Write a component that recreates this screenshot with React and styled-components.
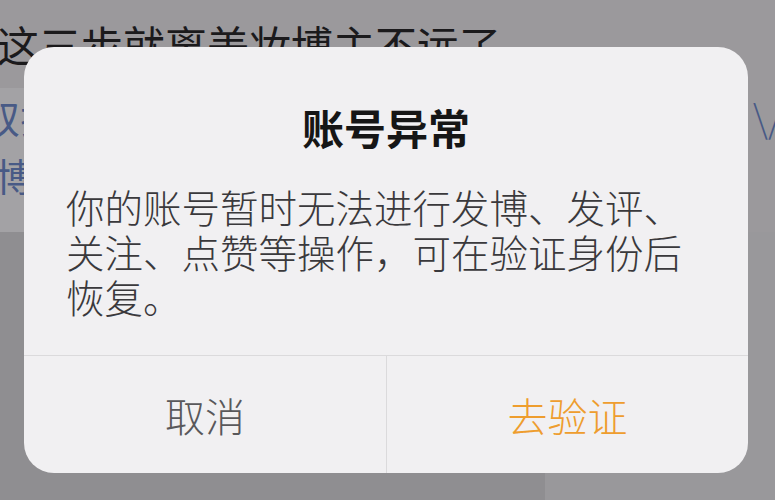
import React from "react";
import styled, { createGlobalStyle } from "styled-components";

const GlobalStyle = createGlobalStyle`
  html, body {
    margin: 0;
    padding: 0;
    background: #9b999c;
  }
  body {
    font-family: "Noto Sans CJK SC", "Noto Sans", sans-serif;
  }
`;

const Screen = styled.div`
  position: relative;
  width: 775px;
  height: 500px;
  overflow: hidden;
  display: flex;
  flex-direction: column;
  background: #9b999c;
`;

const Headline = styled.div`
  height: 88px;
  display: flex;
  align-items: center;
  margin-left: -3px;
  font-size: 42px;
  line-height: 1;
  color: #1b1a1c;
  white-space: nowrap;
`;

const ArticleRow = styled.div`
  height: 144px;
  display: flex;
  justify-content: space-between;
`;

const ArticleLeft = styled.div`
  width: 320px;
  background: #a3a2a5;
  display: flex;
  flex-direction: column;
  overflow: hidden;
`;

const LinkLine = styled.div`
  font-size: 38px;
  line-height: 58px;
  color: #485a86;
  white-space: nowrap;
  margin-left: ${(p) => p.$shift}px;
`;

const ArticleRight = styled.div`
  width: 40px;
  display: flex;
  justify-content: flex-end;
  overflow: hidden;
`;

const SideGlyph = styled.div`
  font-size: 38px;
  line-height: 58px;
  color: #485a86;
  white-space: nowrap;
  margin-right: -8px;
  font-weight: 300;
`;

const LowerRow = styled.div`
  flex: 1;
  display: grid;
  grid-template-columns: 545px 1fr;
`;

const LowerPane = styled.div`
  background: ${(p) => p.$tone};
`;

const Overlay = styled.div`
  position: absolute;
  inset: 0;
  padding: 47px 27px 27px 24px;
  display: flex;
  align-items: flex-start;
`;

const Dialog = styled.div`
  width: 724px;
  background: #f1f0f2;
  border-radius: 30px;
  overflow: hidden;
  display: flex;
  flex-direction: column;
`;

const Content = styled.div`
  padding: 55px 42px 36px 42px;
  display: flex;
  flex-direction: column;
`;

const Title = styled.div`
  font-size: 42px;
  line-height: 50px;
  font-weight: 700;
  color: #161616;
  text-align: center;
  margin-bottom: 32px;
`;

const Message = styled.div`
  font-size: 38.5px;
  line-height: 45px;
  font-weight: 300;
  color: #3a393c;
  white-space: nowrap;
`;

const Actions = styled.div`
  display: grid;
  grid-template-columns: 362px 1fr;
  border-top: 1px solid #dbdadc;
  height: 117px;
`;

const ActionButton = styled.button`
  border: none;
  background: transparent;
  margin: 0;
  padding: 0;
  font-family: inherit;
  font-size: 40px;
  font-weight: 300;
  line-height: 1;
  color: ${(p) => p.$color};
  display: flex;
  align-items: center;
  justify-content: center;
  border-left: ${(p) => (p.$divided ? "1px solid #dbdadc" : "none")};
  cursor: pointer;
`;

export default function App() {
  return (
    <>
      <GlobalStyle />
      <Screen>
        <Headline>这三步就离美妆博主不远了</Headline>
        <ArticleRow>
          <ArticleLeft>
            <LinkLine $shift={-18}>双排眼影的画法</LinkLine>
            <LinkLine $shift={-4}>博主同款</LinkLine>
          </ArticleLeft>
          <ArticleRight>
            <SideGlyph>\/</SideGlyph>
          </ArticleRight>
        </ArticleRow>
        <LowerRow>
          <LowerPane $tone="#8f8e91" />
          <LowerPane $tone="#99989b" />
        </LowerRow>
        <Overlay>
          <Dialog>
            <Content>
              <Title>账号异常</Title>
              <Message>
                你的账号暂时无法进行发博、发评、
                <br />
                关注、点赞等操作，可在验证身份后
                <br />
                恢复。
              </Message>
            </Content>
            <Actions>
              <ActionButton $color="#59585b">取消</ActionButton>
              <ActionButton $color="#ee9d2e" $divided>
                去验证
              </ActionButton>
            </Actions>
          </Dialog>
        </Overlay>
      </Screen>
    </>
  );
}
